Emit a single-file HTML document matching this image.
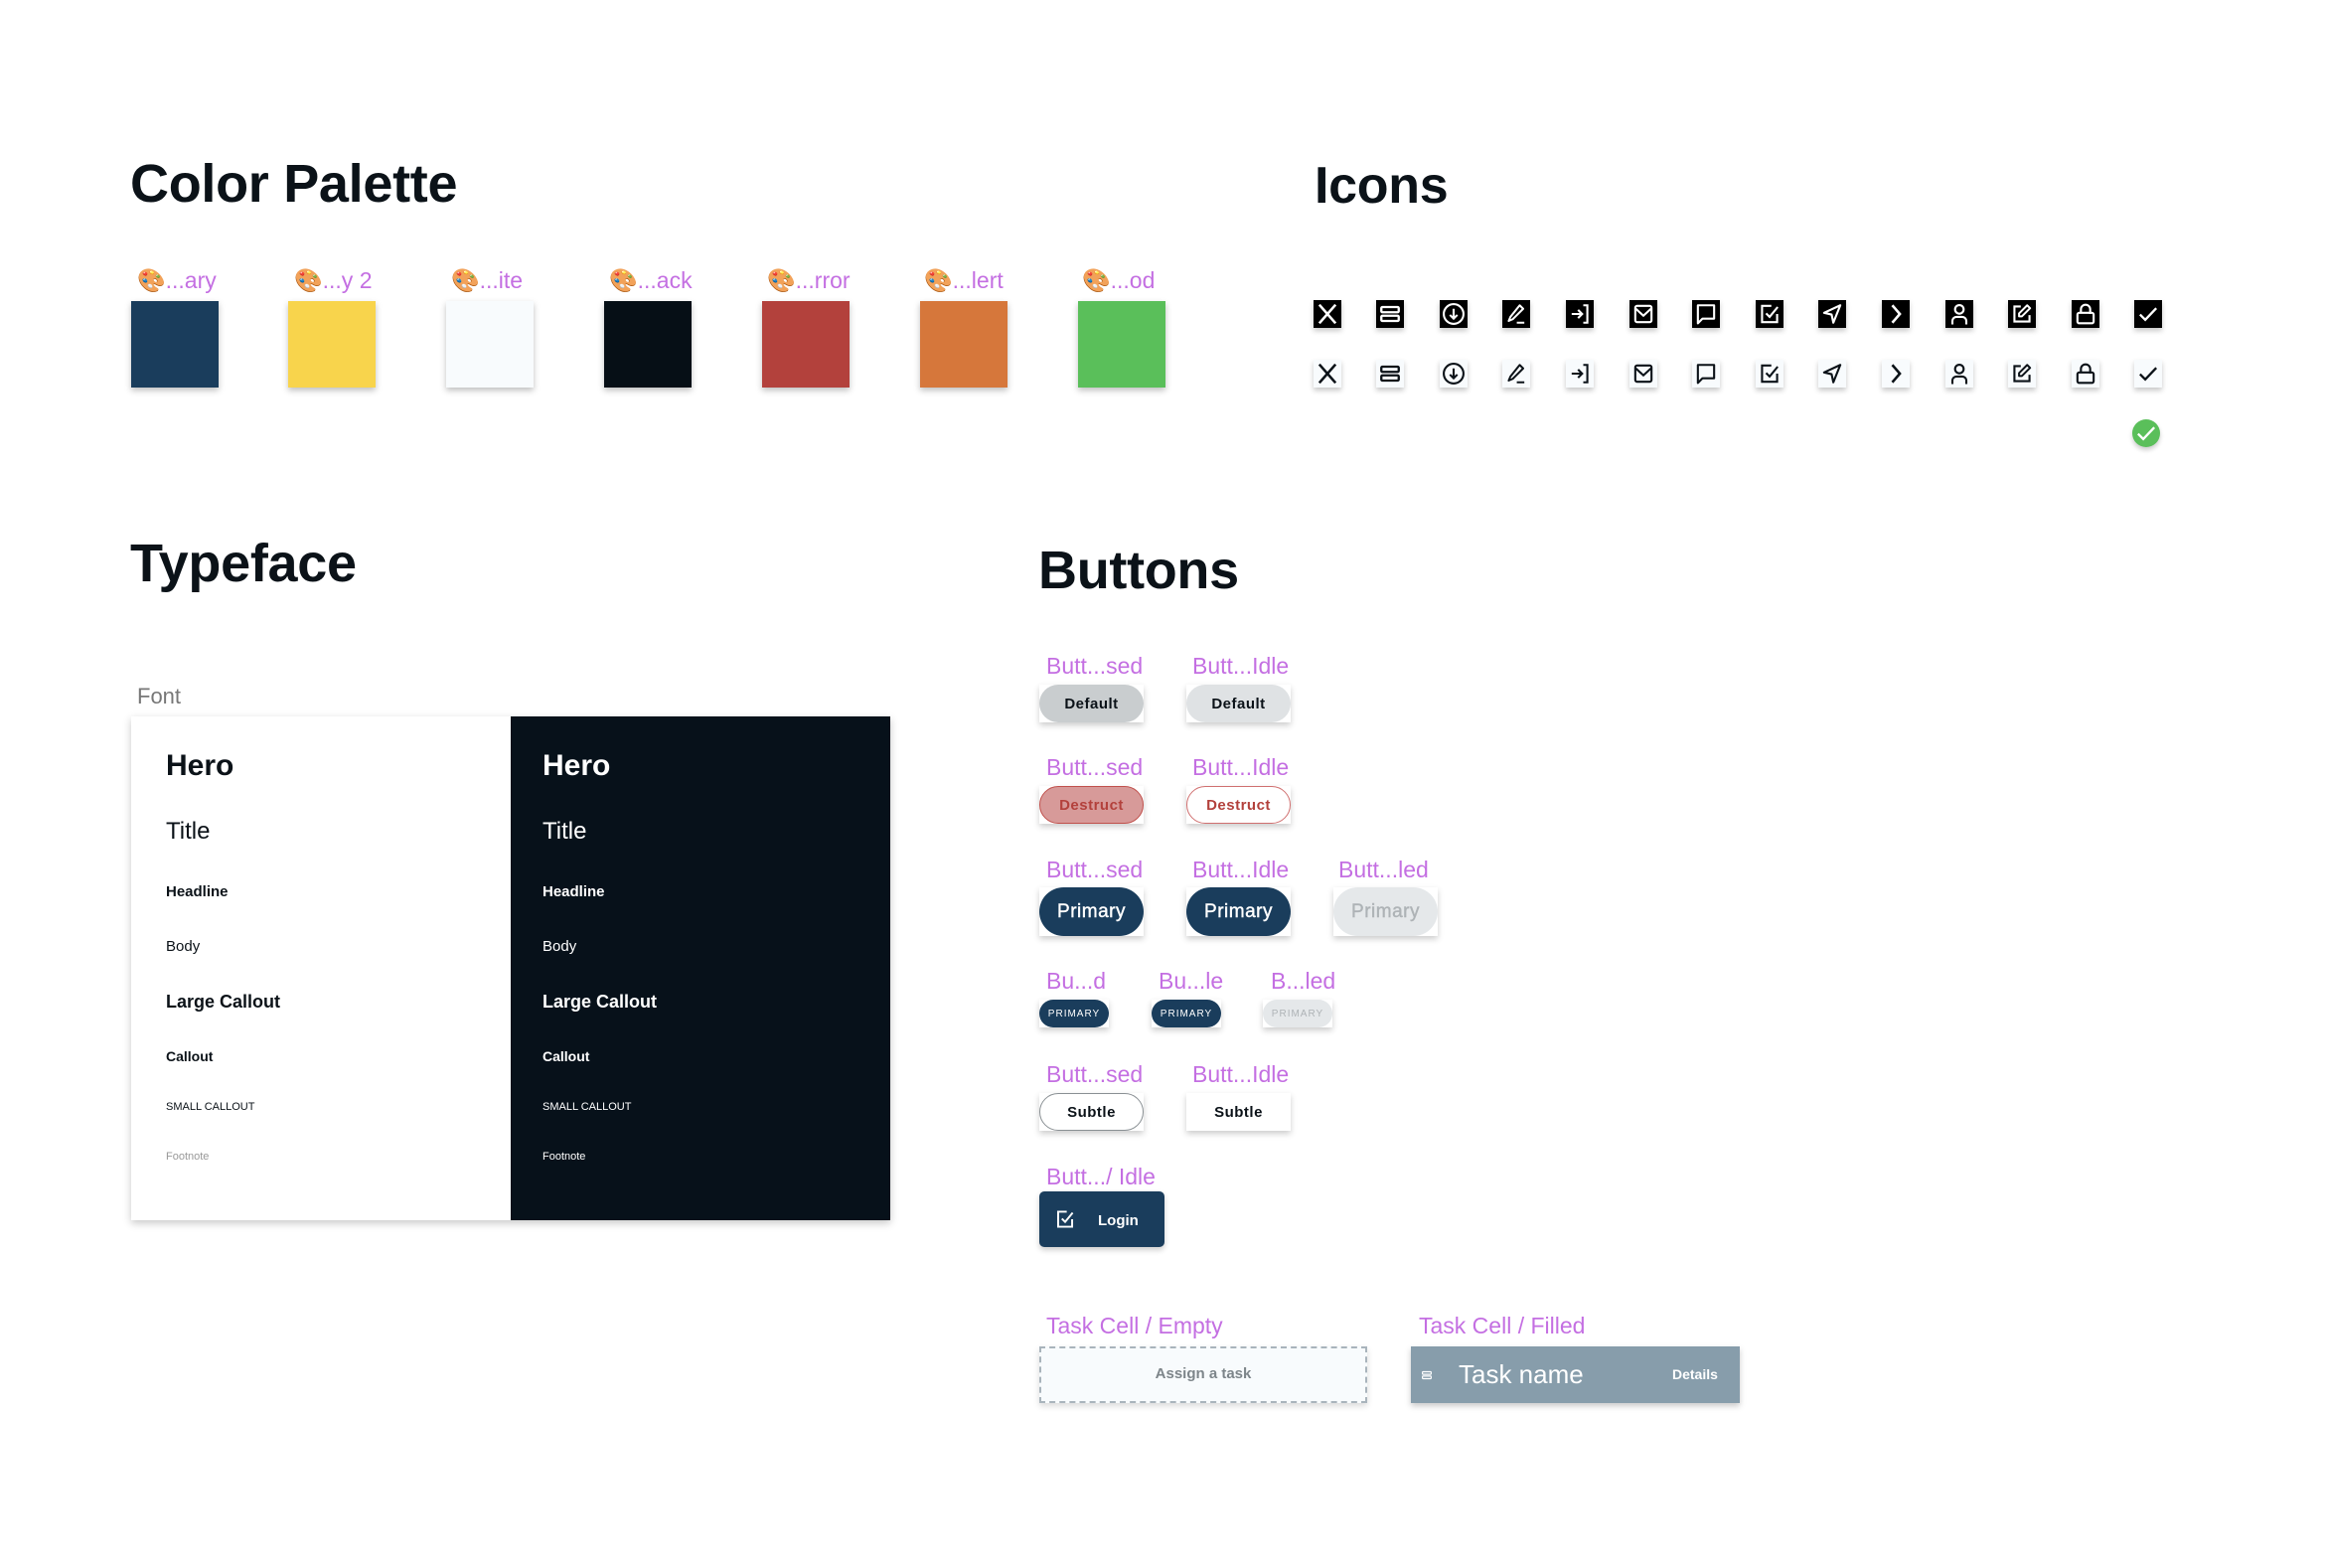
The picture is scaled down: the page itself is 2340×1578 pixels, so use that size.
<!DOCTYPE html>
<html><head><meta charset="utf-8">
<style>
*{margin:0;padding:0;box-sizing:border-box}
html,body{width:2340px;height:1578px;background:#fff;overflow:hidden;font-family:"Liberation Sans",sans-serif;color:#0b1218}
.a{position:absolute}
h1{position:absolute;font-size:54px;font-weight:700;letter-spacing:-0.3px;line-height:54px;color:#0b1218}
.lbl{position:absolute;font-size:23px;line-height:23px;color:#c46fe2;white-space:nowrap}
.sw{position:absolute;top:303px;width:88px;height:87px;box-shadow:0 3px 6px rgba(0,0,0,.25)}
.swl{position:absolute;top:268px;font-size:23px;line-height:28px;color:#c46fe2;white-space:nowrap}
.ic{position:absolute;width:28px;height:28px;box-shadow:0 3px 5px rgba(0,0,0,.22)}
.ic svg{width:28px;height:28px;display:block}
.r1{background:#000;color:#fff;top:302px}
.r2{background:#f8fbfd;color:#0b1218;top:362px}
.box{position:absolute;width:105px;background:#fff;box-shadow:0 3px 6px rgba(0,0,0,.2)}
.pill{position:absolute;left:0;top:0;right:0;bottom:0;border-radius:30px;display:flex;align-items:center;justify-content:center;font-weight:700;font-size:15px;letter-spacing:.5px}
.t{position:absolute;white-space:nowrap}
</style></head><body>
<svg width="0" height="0" style="position:absolute">
<defs>
<symbol id="i1" viewBox="0 0 24 24"><path d="M5 4L19 20M19 4L5 20" fill="none" stroke="currentColor" stroke-width="2.2"/></symbol>
<symbol id="i2" viewBox="0 0 24 24"><rect x="4.5" y="6" width="15" height="4.5" rx="1" fill="none" stroke="currentColor" stroke-width="2"/><rect x="4.5" y="13.5" width="15" height="4.5" rx="1" fill="none" stroke="currentColor" stroke-width="2"/></symbol>
<symbol id="i3" viewBox="0 0 24 24"><circle cx="12" cy="12" r="8.5" fill="none" stroke="currentColor" stroke-width="1.8"/><path d="M12 7.5v8.5M8.8 12.8L12 16l3.2-3.2" fill="none" stroke="currentColor" stroke-width="1.8"/></symbol>
<symbol id="i4" viewBox="0 0 24 24"><path d="M15 4.5l3 3L9 16.5 5.5 18l1.5-3.5z" fill="none" stroke="currentColor" stroke-width="1.7" stroke-linejoin="round"/><path d="M12.5 19.5h6.5" stroke="currentColor" stroke-width="1.7"/></symbol>
<symbol id="i5" viewBox="0 0 24 24"><path d="M5 12h9M10.5 8.5L14 12l-3.5 3.5M15 4.5h3.5v15H15" fill="none" stroke="currentColor" stroke-width="1.8"/></symbol>
<symbol id="i6" viewBox="0 0 24 24"><rect x="5" y="5" width="14" height="14" rx="1.5" fill="none" stroke="currentColor" stroke-width="1.8"/><path d="M5.5 7.5l6.5 6 6.5-6" fill="none" stroke="currentColor" stroke-width="1.8"/></symbol>
<symbol id="i7" viewBox="0 0 24 24"><path d="M5 4.5h14v11.5H9L5 20z" fill="none" stroke="currentColor" stroke-width="1.8" stroke-linejoin="round"/></symbol>
<symbol id="i8" viewBox="0 0 24 24"><path d="M18.5 12v7H5.5V5h8" fill="none" stroke="currentColor" stroke-width="1.8"/><path d="M9 11.5l3 3L19 6" fill="none" stroke="currentColor" stroke-width="1.8"/></symbol>
<symbol id="i9" viewBox="0 0 24 24"><path d="M19 4.5L5 11l6.5 1.5L13 19.5z" fill="none" stroke="currentColor" stroke-width="1.8" stroke-linejoin="round"/></symbol>
<symbol id="i10" viewBox="0 0 24 24"><path d="M9 4.5l6.5 7.5L9 19.5" fill="none" stroke="currentColor" stroke-width="2.2"/></symbol>
<symbol id="i11" viewBox="0 0 24 24"><circle cx="12" cy="8" r="3.7" fill="none" stroke="currentColor" stroke-width="1.8"/><path d="M6 21v-3a3.5 3.5 0 013.5-3.5h5A3.5 3.5 0 0118 18v3" fill="none" stroke="currentColor" stroke-width="1.8"/></symbol>
<symbol id="i12" viewBox="0 0 24 24"><path d="M11 5.5H5.5v13h13V13" fill="none" stroke="currentColor" stroke-width="1.8"/><path d="M16.5 4.5l2.5 2.5-7 7H9.5v-2.5z" fill="none" stroke="currentColor" stroke-width="1.7" stroke-linejoin="round"/></symbol>
<symbol id="i13" viewBox="0 0 24 24"><rect x="5" y="11" width="14" height="9" rx="1.5" fill="none" stroke="currentColor" stroke-width="1.8"/><path d="M8 11V8a4 4 0 018 0v4" fill="none" stroke="currentColor" stroke-width="1.8"/></symbol>
<symbol id="i14" viewBox="0 0 24 24"><path d="M5 12.5l4.5 4.5L19 7" fill="none" stroke="currentColor" stroke-width="2"/></symbol>
</defs></svg>

<h1 style="left:131px;top:158px">Color Palette</h1>
<h1 style="left:1323px;top:160px;font-size:52px">Icons</h1>
<h1 style="left:131px;top:540px">Typeface</h1>
<h1 style="left:1045px;top:547px">Buttons</h1>

<!-- palette -->
<div class="swl" style="left:138px">🎨...ary</div><div class="sw" style="left:132px;background:#1a3d5c"></div>
<div class="swl" style="left:296px">🎨...y 2</div><div class="sw" style="left:290px;background:#f8d44c"></div>
<div class="swl" style="left:454px">🎨...ite</div><div class="sw" style="left:449px;background:#f8fbfd"></div>
<div class="swl" style="left:613px">🎨...ack</div><div class="sw" style="left:608px;background:#060f16"></div>
<div class="swl" style="left:772px">🎨...rror</div><div class="sw" style="left:767px;background:#b3413c"></div>
<div class="swl" style="left:930px">🎨...lert</div><div class="sw" style="left:926px;background:#d6773b"></div>
<div class="swl" style="left:1089px">🎨...od</div><div class="sw" style="left:1085px;background:#5abf5a"></div>

<!-- icons row1 -->
<div class="ic r1" style="left:1322px"><svg><use href="#i1"/></svg></div>
<div class="ic r1" style="left:1385px"><svg><use href="#i2"/></svg></div>
<div class="ic r1" style="left:1449px"><svg><use href="#i3"/></svg></div>
<div class="ic r1" style="left:1512px"><svg><use href="#i4"/></svg></div>
<div class="ic r1" style="left:1576px"><svg><use href="#i5"/></svg></div>
<div class="ic r1" style="left:1640px"><svg><use href="#i6"/></svg></div>
<div class="ic r1" style="left:1703px"><svg><use href="#i7"/></svg></div>
<div class="ic r1" style="left:1767px"><svg><use href="#i8"/></svg></div>
<div class="ic r1" style="left:1830px"><svg><use href="#i9"/></svg></div>
<div class="ic r1" style="left:1894px"><svg><use href="#i10"/></svg></div>
<div class="ic r1" style="left:1958px"><svg><use href="#i11"/></svg></div>
<div class="ic r1" style="left:2021px"><svg><use href="#i12"/></svg></div>
<div class="ic r1" style="left:2085px"><svg><use href="#i13"/></svg></div>
<div class="ic r1" style="left:2148px"><svg><use href="#i14"/></svg></div>
<!-- icons row2 -->
<div class="ic r2" style="left:1322px"><svg><use href="#i1"/></svg></div>
<div class="ic r2" style="left:1385px"><svg><use href="#i2"/></svg></div>
<div class="ic r2" style="left:1449px"><svg><use href="#i3"/></svg></div>
<div class="ic r2" style="left:1512px"><svg><use href="#i4"/></svg></div>
<div class="ic r2" style="left:1576px"><svg><use href="#i5"/></svg></div>
<div class="ic r2" style="left:1640px"><svg><use href="#i6"/></svg></div>
<div class="ic r2" style="left:1703px"><svg><use href="#i7"/></svg></div>
<div class="ic r2" style="left:1767px"><svg><use href="#i8"/></svg></div>
<div class="ic r2" style="left:1830px"><svg><use href="#i9"/></svg></div>
<div class="ic r2" style="left:1894px"><svg><use href="#i10"/></svg></div>
<div class="ic r2" style="left:1958px"><svg><use href="#i11"/></svg></div>
<div class="ic r2" style="left:2021px"><svg><use href="#i12"/></svg></div>
<div class="ic r2" style="left:2085px"><svg><use href="#i13"/></svg></div>
<div class="ic r2" style="left:2148px"><svg><use href="#i14"/></svg></div>
<div class="a" style="left:2146px;top:422px;width:28px;height:28px;border-radius:50%;background:#5abf5a;box-shadow:0 3px 5px rgba(0,0,0,.2);color:#fff"><svg width="28" height="28"><use href="#i14" width="28" height="28"/></svg></div>

<!-- typeface -->
<div class="t" style="left:138px;top:688px;font-size:22px;color:#777">Font</div>
<div class="a" style="left:132px;top:721px;width:764px;height:507px;background:#fff;box-shadow:0 3px 8px rgba(0,0,0,.22)"></div>
<div class="a" style="left:514px;top:721px;width:382px;height:507px;background:#07111a"></div>
<div style="position:absolute;left:167px;top:-3px;color:#0b1218">
 <div class="t" style="top:757px;font-size:30px;font-weight:700">Hero</div>
 <div class="t" style="top:826px;font-size:24px">Title</div>
 <div class="t" style="top:892px;font-size:15px;font-weight:700">Headline</div>
 <div class="t" style="top:947px;font-size:15px">Body</div>
 <div class="t" style="top:1001px;font-size:18px;font-weight:700">Large Callout</div>
 <div class="t" style="top:1058px;font-size:14px;font-weight:700">Callout</div>
 <div class="t" style="top:1111px;font-size:11px">SMALL CALLOUT</div>
 <div class="t" style="top:1161px;font-size:11px;color:#999">Footnote</div>
</div>
<div style="position:absolute;left:546px;top:-3px;color:#fff">
 <div class="t" style="top:757px;font-size:30px;font-weight:700">Hero</div>
 <div class="t" style="top:826px;font-size:24px">Title</div>
 <div class="t" style="top:892px;font-size:15px;font-weight:700">Headline</div>
 <div class="t" style="top:947px;font-size:15px">Body</div>
 <div class="t" style="top:1001px;font-size:18px;font-weight:700">Large Callout</div>
 <div class="t" style="top:1058px;font-size:14px;font-weight:700">Callout</div>
 <div class="t" style="top:1111px;font-size:11px">SMALL CALLOUT</div>
 <div class="t" style="top:1161px;font-size:11px">Footnote</div>
</div>

<!-- buttons -->
<div class="lbl" style="left:1053px;top:659px">Butt...sed</div>
<div class="lbl" style="left:1200px;top:659px">Butt...Idle</div>
<div class="box" style="left:1046px;top:689px;height:38px"><div class="pill" style="background:#c9cdcf;color:#0b1218">Default</div></div>
<div class="box" style="left:1194px;top:689px;height:38px"><div class="pill" style="background:#dfe2e4;color:#0b1218">Default</div></div>

<div class="lbl" style="left:1053px;top:761px">Butt...sed</div>
<div class="lbl" style="left:1200px;top:761px">Butt...Idle</div>
<div class="box" style="left:1046px;top:791px;height:38px"><div class="pill" style="background:#d79a99;border:1px solid #c0504c;color:#b3413c">Destruct</div></div>
<div class="box" style="left:1194px;top:791px;height:38px"><div class="pill" style="background:#fff;border:1px solid #d07070;color:#b3413c">Destruct</div></div>

<div class="lbl" style="left:1053px;top:864px">Butt...sed</div>
<div class="lbl" style="left:1200px;top:864px">Butt...Idle</div>
<div class="lbl" style="left:1347px;top:864px">Butt...led</div>
<div class="box" style="left:1046px;top:893px;height:49px"><div class="pill" style="background:#1a3d5c;color:#fff;font-size:19px;font-weight:400;-webkit-text-stroke:0.4px #fff">Primary</div></div>
<div class="box" style="left:1194px;top:893px;height:49px"><div class="pill" style="background:#1a3d5c;color:#fff;font-size:19px;font-weight:400;-webkit-text-stroke:0.4px #fff">Primary</div></div>
<div class="box" style="left:1342px;top:893px;height:49px"><div class="pill" style="background:#e5e8ea;color:#aeb3b6;font-size:19px;font-weight:400;-webkit-text-stroke:0.4px #aeb3b6">Primary</div></div>

<div class="lbl" style="left:1053px;top:976px">Bu...d</div>
<div class="lbl" style="left:1166px;top:976px">Bu...le</div>
<div class="lbl" style="left:1279px;top:976px">B...led</div>
<div class="box" style="left:1046px;top:1006px;height:28px;width:70px"><div class="pill" style="background:#1a3d5c;color:#fff;font-size:10px;font-weight:400;letter-spacing:1px">PRIMARY</div></div>
<div class="box" style="left:1159px;top:1006px;height:28px;width:70px"><div class="pill" style="background:#1a3d5c;color:#fff;font-size:10px;font-weight:400;letter-spacing:1px">PRIMARY</div></div>
<div class="box" style="left:1271px;top:1006px;height:28px;width:70px"><div class="pill" style="background:#e5e8ea;color:#aeb3b6;font-size:10px;font-weight:400;letter-spacing:1px">PRIMARY</div></div>

<div class="lbl" style="left:1053px;top:1070px">Butt...sed</div>
<div class="lbl" style="left:1200px;top:1070px">Butt...Idle</div>
<div class="box" style="left:1046px;top:1100px;height:38px"><div class="pill" style="background:#fff;border:1px solid #8a9094;color:#0b1218">Subtle</div></div>
<div class="box" style="left:1194px;top:1100px;height:38px"><div class="pill" style="background:#fff;border-radius:0;color:#0b1218">Subtle</div></div>

<div class="lbl" style="left:1053px;top:1173px">Butt.../ Idle</div>
<div class="a" style="left:1046px;top:1199px;width:126px;height:56px;background:#1a3d5c;border-radius:5px;box-shadow:0 3px 6px rgba(0,0,0,.2);color:#fff">
 <svg class="a" style="left:13px;top:15px" width="26" height="26"><use href="#i8" width="26" height="26"/></svg>
 <div class="t" style="left:59px;top:21px;font-size:15px;font-weight:700">Login</div>
</div>

<!-- task cells -->
<div class="lbl" style="left:1053px;top:1323px">Task Cell / Empty</div>
<div class="lbl" style="left:1428px;top:1323px">Task Cell / Filled</div>
<div class="a" style="left:1046px;top:1355px;width:330px;height:57px;background:#f8fbfd;border:2px dashed #a9b4bc;box-shadow:0 3px 6px rgba(0,0,0,.15)">
 <div class="t" style="left:0;right:0;top:17px;text-align:center;font-size:15px;font-weight:700;color:#7d858a">Assign a task</div>
</div>
<div class="a" style="left:1420px;top:1355px;width:331px;height:57px;background:#879dab;box-shadow:0 3px 6px rgba(0,0,0,.22);color:#fff">
 <svg class="a" style="left:9px;top:22px" width="14" height="14"><use href="#i2" width="14" height="14"/></svg>
 <div class="t" style="left:48px;top:13px;font-size:26px">Task name</div>
 <div class="t" style="left:263px;top:20px;font-size:14px;font-weight:700">Details</div>
</div>
</body></html>
